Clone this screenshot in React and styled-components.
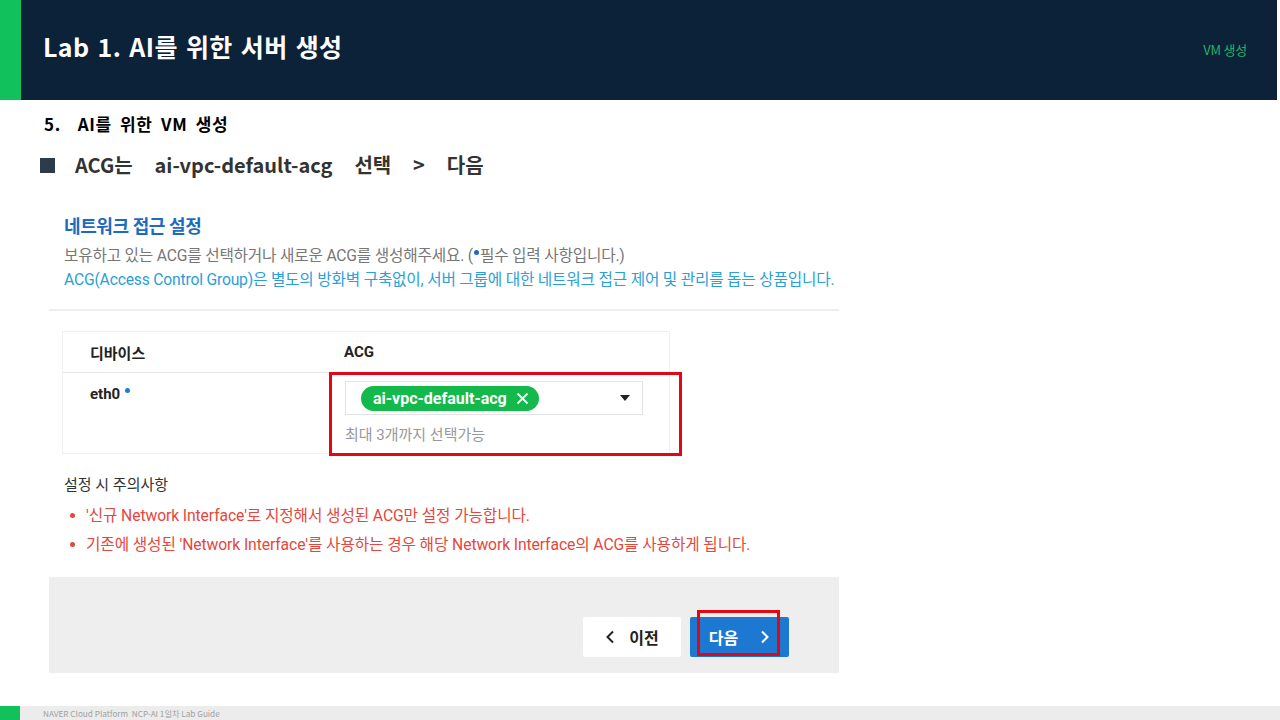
import React from 'react';
import styled, { createGlobalStyle } from 'styled-components';

const GlobalStyle = createGlobalStyle`
  html, body { margin: 0; padding: 0; background: #fff; }
  body { font-family: "Noto Sans CJK KR", "Noto Sans", sans-serif; }
  * { box-sizing: border-box; }
`;

const Slide = styled.div`
  width: 1280px;
  height: 720px;
  display: flex;
  flex-direction: column;
  overflow: hidden;
  position: relative;
`;

const Header = styled.header`
  height: 100px;
  width: 1277px;
  display: flex;
  align-items: center;
  background: #0b2239;
`;

const GreenBar = styled.div`
  width: 21px;
  align-self: stretch;
  background: #11c15b;
`;

const Title = styled.h1`
  margin: 0 0 8px 22px;
  flex: 1;
  color: #fff;
  font-size: 25px;
  font-weight: 700;
  letter-spacing: 0.4px;
  word-spacing: 2px;
`;

const Crumb = styled.span`
  margin-right: 30px;
  margin-bottom: 2px;
  color: #22b36a;
  font-size: 13px;
  letter-spacing: -0.2px;
`;

const Body = styled.main`
  flex: 1;
  display: flex;
  flex-direction: column;
`;

const Step = styled.h2`
  margin: 13px 0 0 44px;
  font-size: 17px;
  font-weight: 700;
  color: #000;
  line-height: 22px;
  letter-spacing: 0.6px;
  word-spacing: 4px;
`;

const Lead = styled.p`
  margin: 15px 0 0 40px;
  display: flex;
  align-items: center;
  font-size: 20px;
  font-weight: 700;
  color: #333;
  line-height: 30px;
  word-spacing: 6.4px;
  white-space: pre;
`;

const Square = styled.span`
  width: 15px;
  height: 15px;
  background: #2e3b4c;
  margin-right: 20px;
`;

const Capture = styled.section`
  position: relative;
  width: 790px;
  margin: 24px 0 0 49px;
  font-family: Roboto, "Noto Sans CJK KR", sans-serif;
`;

const Intro = styled.div`
  padding: 11px 0 17px 15px;
  border-bottom: 2px solid #eeeeee;
`;

const PanelTitle = styled.h3`
  margin: 0;
  font-size: 18px;
  font-weight: 700;
  color: #1c6bbf;
  line-height: 24px;
  letter-spacing: -0.4px;
`;

const Note = styled.p`
  margin: ${(p) => (p.$first ? '5px' : '0')} 0 0;
  font-size: 15.7px;
  line-height: 24px;
  color: ${(p) => p.$color};
  letter-spacing: -0.2px;
  white-space: nowrap;
`;

const Dot = styled.span`
  display: inline-block;
  width: 5px;
  height: 5px;
  border-radius: 50%;
  background: ${(p) => p.$color || '#1c6bbf'};
  vertical-align: ${(p) => p.$raise || '6px'};
  margin: 0 1px;
`;

const Table = styled.div`
  margin: 20px 0 0 13px;
  width: 608px;
  border: 1px solid #f1f1f1;
  display: grid;
  grid-template-columns: 268px 1fr;
`;

const HeadCell = styled.div`
  height: 41px;
  display: flex;
  align-items: center;
  padding-left: ${(p) => p.$pad}px;
  border-bottom: 1px solid #e6e6e6;
  font-size: 15px;
  font-weight: 700;
  color: #222;
`;

const Cell = styled.div`
  height: 80px;
  padding: ${(p) => p.$top}px 0 0 ${(p) => p.$pad}px;
  font-size: 15px;
  font-weight: 700;
  color: #222;
`;

const Select = styled.div`
  width: 298px;
  height: 34px;
  border: 1px solid #e2e2e2;
  display: flex;
  align-items: center;
  justify-content: space-between;
  padding: 0 12px 0 15px;
`;

const Chip = styled.span`
  height: 25px;
  display: inline-flex;
  align-items: center;
  gap: 9px;
  padding: 0 10px 0 12px;
  border-radius: 13px;
  background: #14b94b;
  color: #fff;
  font-size: 16px;
  font-weight: 700;
`;

const Caret = styled.span`
  width: 0;
  height: 0;
  border-left: 5px solid transparent;
  border-right: 5px solid transparent;
  border-top: 6px solid #222;
`;

const Hint = styled.div`
  margin-top: 8px;
  font-size: 15px;
  font-weight: 400;
  color: #999;
`;

const Caution = styled.div`
  padding: 20px 0 18px 15px;
`;

const CautionTitle = styled.div`
  font-size: 15px;
  color: #333;
  line-height: 22px;
`;

const CautionList = styled.ul`
  margin: 5px 0 0;
  padding: 0;
  list-style: none;
`;

const CautionItem = styled.li`
  display: flex;
  align-items: center;
  gap: 10px;
  padding-left: 5px;
  font-size: 15.7px;
  line-height: 29px;
  color: #e5473d;
  letter-spacing: -0.1px;
  white-space: nowrap;
`;

const Footer = styled.div`
  height: 96px;
  background: #eeeeee;
  display: flex;
  justify-content: flex-end;
  align-items: center;
  gap: 9px;
  padding: 24px 50px 0 0;
`;

const Button = styled.button`
  width: ${(p) => p.$w}px;
  height: 40px;
  border: none;
  border-radius: 2px;
  display: flex;
  align-items: center;
  justify-content: center;
  gap: ${(p) => p.$gap}px;
  font-family: "Noto Sans CJK KR", sans-serif;
  font-size: 16px;
  font-weight: 700;
  background: ${(p) => (p.$primary ? '#1d78d1' : '#fff')};
  color: ${(p) => (p.$primary ? '#fff' : '#222')};
`;

const Highlight = styled.div`
  position: absolute;
  border: 3px solid #e30613;
`;

const PageFoot = styled.footer`
  height: 14px;
  margin-top: auto;
  background: #ececec;
  display: flex;
  align-items: center;
`;

const FootGreen = styled.div`
  width: 20px;
  align-self: stretch;
  background: #11c15b;
`;

const FootText = styled.span`
  margin-left: 23px;
  font-size: 8.2px;
  color: #a0a0a0;
`;

const Chevron = ({ dir, color }) => (
  <svg width="10" height="14" viewBox="0 0 10 14">
    <path
      d={dir === 'left' ? 'M8 1.5 L2.5 7 L8 12.5' : 'M2 1.5 L7.5 7 L2 12.5'}
      fill="none"
      stroke={color}
      strokeWidth="2"
    />
  </svg>
);

const Cross = () => (
  <svg width="13" height="13" viewBox="0 0 13 13">
    <path d="M1.5 1.5 L11.5 11.5 M11.5 1.5 L1.5 11.5" stroke="#fff" strokeWidth="1.8" />
  </svg>
);

export default function App() {
  return (
    <>
      <GlobalStyle />
      <Slide>
        <Header>
          <GreenBar />
          <Title>Lab 1. AI를 위한 서버 생성</Title>
          <Crumb>VM 생성</Crumb>
        </Header>
        <Body>
          <Step>5.&nbsp; AI를 위한 VM 생성</Step>
          <Lead>
            <Square />
            {'ACG는  ai-vpc-default-acg  선택  >  다음'}
          </Lead>

          <Capture>
            <Intro>
              <PanelTitle>네트워크 접근 설정</PanelTitle>
              <Note $first $color="#777">
                보유하고 있는 ACG를 선택하거나 새로운 ACG를 생성해주세요. (<Dot />필수 입력 사항입니다.)
              </Note>
              <Note $color="#2a9fd8">
                ACG(Access Control Group)은 별도의 방화벽 구축없이, 서버 그룹에 대한 네트워크 접근 제어 및 관리를 돕는 상품입니다.
              </Note>
            </Intro>

            <Table>
              <HeadCell $pad={27}>디바이스</HeadCell>
              <HeadCell $pad={13}>ACG</HeadCell>
              <Cell $pad={27} $top={12}>
                eth0 <Dot $color="#1c7cd5" />
              </Cell>
              <Cell $pad={14} $top={8}>
                <Select>
                  <Chip>
                    ai-vpc-default-acg
                    <Cross />
                  </Chip>
                  <Caret />
                </Select>
                <Hint>최대 3개까지 선택가능</Hint>
              </Cell>
            </Table>

            <Caution>
              <CautionTitle>설정 시 주의사항</CautionTitle>
              <CautionList>
                <CautionItem>
                  <Dot $color="#e5473d" $raise="0" />
                  '신규 Network Interface'로 지정해서 생성된 ACG만 설정 가능합니다.
                </CautionItem>
                <CautionItem>
                  <Dot $color="#e5473d" $raise="0" />
                  기존에 생성된 'Network Interface'를 사용하는 경우 해당 Network Interface의 ACG를 사용하게 됩니다.
                </CautionItem>
              </CautionList>
            </Caution>

            <Footer>
              <Button $w={98} $gap={14}>
                <Chevron dir="left" color="#222" />
                이전
              </Button>
              <Button $w={99} $gap={22} $primary>
                다음
                <Chevron dir="right" color="#fff" />
              </Button>
            </Footer>

            <Highlight style={{ left: 280, top: 168, width: 353, height: 84 }} />
            <Highlight style={{ left: 648, top: 406, width: 83, height: 46 }} />
          </Capture>
        </Body>
        <PageFoot>
          <FootGreen />
          <FootText>NAVER Cloud Platform&nbsp; NCP-AI 1일차 Lab Guide</FootText>
        </PageFoot>
      </Slide>
    </>
  );
}
